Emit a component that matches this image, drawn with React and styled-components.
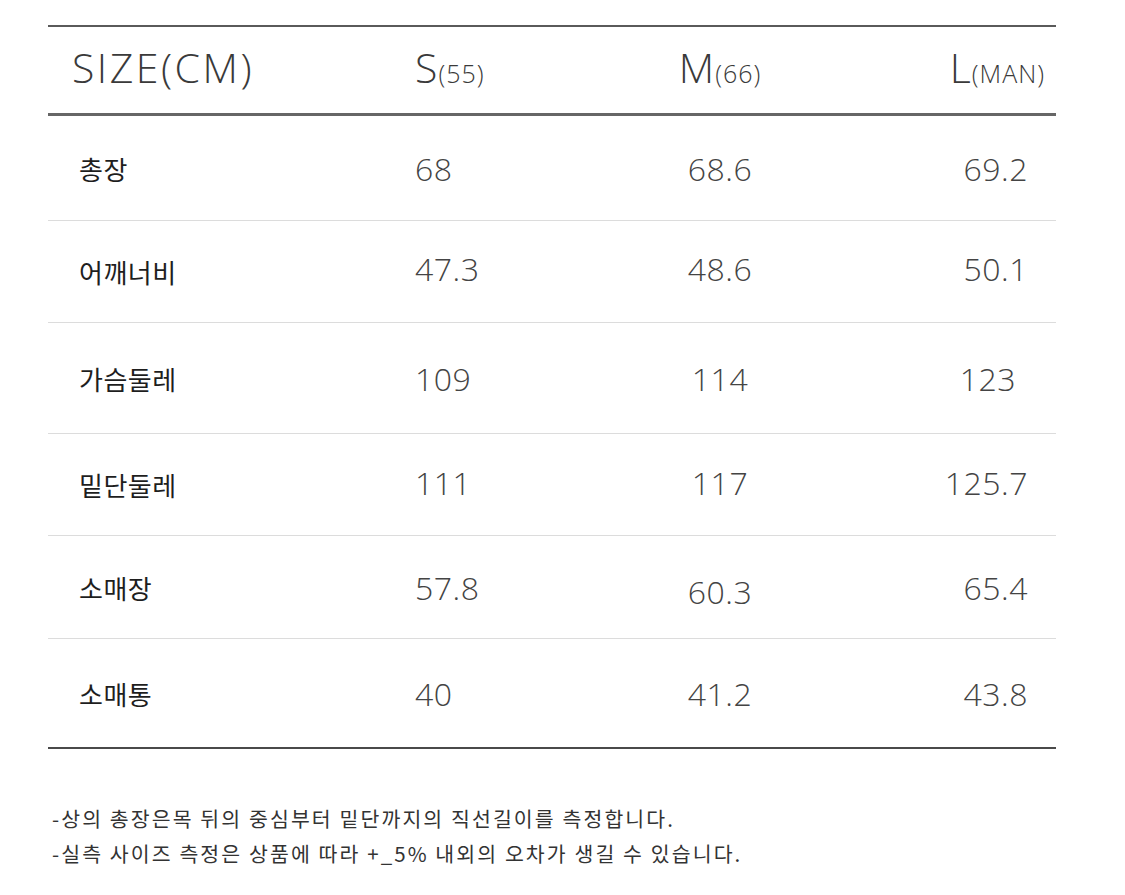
import React from 'react';
import styled, { createGlobalStyle } from 'styled-components';

const GlobalStyle = createGlobalStyle`
  html, body {
    margin: 0;
    padding: 0;
    background: #fff;
  }
  body {
    font-family: "Open Sans", "Noto Sans CJK KR", sans-serif;
    color: #333;
  }
`;

const Page = styled.div`
  width: 1125px;
  height: 895px;
  padding: 25px 0 0 48px;
  box-sizing: border-box;
`;

const Table = styled.div`
  width: 1008px;
  display: grid;
  grid-template-columns: 352px 200px 240px 216px;
  grid-template-rows: 89px 105px 102px 111px 102px 103px 108px;
  border-top: 2px solid #5a5a5a;
  border-bottom: 2px solid #4a4a4a;
`;

const HeadCell = styled.div`
  display: flex;
  align-items: center;
  justify-content: ${p => p.$align || 'flex-start'};
  padding: 0 ${p => p.$right || 0}px 6px ${p => p.$left || 0}px;
  border-bottom: 3px solid #666;
  white-space: nowrap;
`;

const HeadText = styled.span`
  font-family: "Open Sans", sans-serif;
  font-weight: 300;
  font-size: 41px;
  letter-spacing: ${p => p.$spacing || 0}px;
  color: #3a3a3a;
`;

const Sub = styled.span`
  font-size: 25px;
  letter-spacing: 1px;
  margin-left: 1px;
`;

const Label = styled.div`
  display: flex;
  align-items: center;
  padding-left: 31px;
  border-bottom: ${p => (p.$last ? 'none' : '1px solid #dcdcdc')};
  font-family: "Noto Sans CJK KR", sans-serif;
  font-weight: 400;
  font-size: 26px;
  letter-spacing: 0.5px;
  color: #1e1e1e;
`;

const Value = styled.div`
  display: flex;
  align-items: center;
  justify-content: ${p => p.$align || 'flex-start'};
  padding-left: ${p => p.$left || 0}px;
  padding-right: ${p => p.$right || 0}px;
  padding-top: ${p => Math.max(p.$dy || 0, 0)}px;
  padding-bottom: ${p => Math.max(-(p.$dy || 0), 0)}px;
  border-bottom: ${p => (p.$last ? 'none' : '1px solid #dcdcdc')};
  font-family: "Open Sans", sans-serif;
  font-weight: 300;
  font-size: 32px;
  letter-spacing: 0.5px;
  color: #444;
`;

const Notes = styled.div`
  margin: 52px 0 0 4px;
  font-family: "Noto Sans CJK KR", sans-serif;
  font-size: 20.5px;
  line-height: 35px;
  color: #333;
  letter-spacing: 2.1px;
`;

const rows = [
  { label: '총장', s: '68', m: '68.6', l: '69.2' },
  { label: '어깨너비', s: '47.3', m: '48.6', l: '50.1', dy: -6 },
  { label: '가슴둘레', s: '109', m: '114', l: '123', lr: 40 },
  { label: '밑단둘레', s: '111', m: '117', l: '125.7', dy: -4 },
  { label: '소매장', s: '57.8', m: '60.3', l: '65.4', mdy: 8 },
  { label: '소매통', s: '40', m: '41.2', l: '43.8' },
];

export default function App() {
  return (
    <Page>
      <GlobalStyle />
      <Table>
        <HeadCell $left={24}><HeadText $spacing={2.5}>SIZE(CM)</HeadText></HeadCell>
        <HeadCell $left={15}><HeadText>S<Sub>(55)</Sub></HeadText></HeadCell>
        <HeadCell $align="center"><HeadText>M<Sub>(66)</Sub></HeadText></HeadCell>
        <HeadCell $align="flex-end" $right={11}><HeadText>L<Sub>(MAN)</Sub></HeadText></HeadCell>
        {rows.map((r, i) => {
          const last = i === rows.length - 1;
          return (
            <React.Fragment key={r.label}>
              <Label $last={last}>{r.label}</Label>
              <Value $left={15} $dy={r.dy} $last={last}>{r.s}</Value>
              <Value $align="center" $dy={r.mdy || r.dy} $last={last}>{r.m}</Value>
              <Value $align="flex-end" $right={r.lr || 28} $dy={r.dy} $last={last}>{r.l}</Value>
            </React.Fragment>
          );
        })}
      </Table>
      <Notes>
        <div>-상의 총장은목 뒤의 중심부터 밑단까지의 직선길이를 측정합니다.</div>
        <div>-실측 사이즈 측정은 상품에 따라 +_5% 내외의 오차가 생길 수 있습니다.</div>
      </Notes>
    </Page>
  );
}
